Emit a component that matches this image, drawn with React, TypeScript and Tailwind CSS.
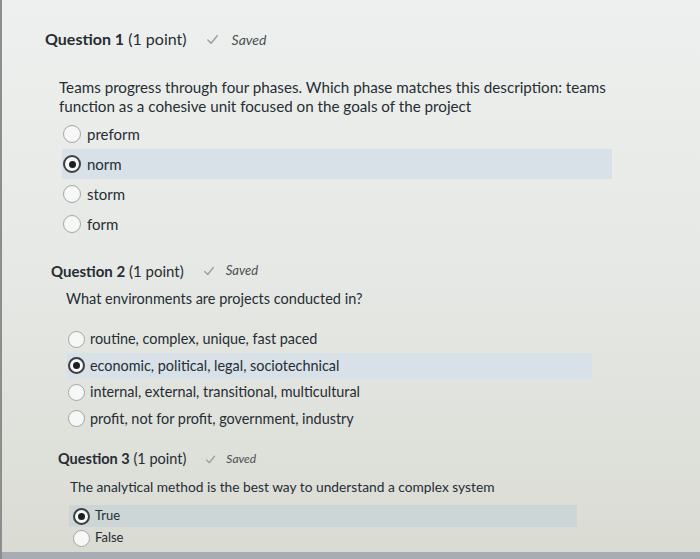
import { Fragment } from 'react';

interface Question {
  num: number;
  text: string[];
  options: string[];
  selected: number;
}

const questions: Question[] = [
  {
    num: 1,
    text: [
      'Teams progress through four phases. Which phase matches this description: teams',
      'function as a cohesive unit focused on the goals of the project',
    ],
    options: ['preform', 'norm', 'storm', 'form'],
    selected: 1,
  },
  {
    num: 2,
    text: ['What environments are projects conducted in?'],
    options: [
      'routine, complex, unique, fast paced',
      'economic, political, legal, sociotechnical',
      'internal, external, transitional, multicultural',
      'profit, not for profit, government, industry',
    ],
    selected: 1,
  },
  {
    num: 3,
    text: ['The analytical method is the best way to understand a complex system'],
    options: ['True', 'False'],
    selected: 0,
  },
];

// per-question sizing, the photo shrinks toward the bottom
const sizes = [
  {
    wrap: 'pl-[43px] pt-[27px]',
    head: 'text-[16px] leading-[24px]',
    saved: 'text-[14px] ml-[18px]',
    check: 'w-[15px] h-[15px] mr-[12px]',
    text: 'text-[15.2px] leading-[19px] mt-[27px] pl-[14px] pr-[4px]',
    list: 'mt-[3px] pl-[17px]',
    row: 'h-[30px] w-[550px] pl-[1px]',
    radio: 'w-[18px] h-[18px]',
    dot: 'w-[7px] h-[7px]',
    label: 'text-[15px] ml-[6px]',
  },
  {
    wrap: 'pl-[49px] pt-[22px]',
    head: 'text-[15px] leading-[20px]',
    saved: 'text-[13px] ml-[18px]',
    check: 'w-[14px] h-[14px] mr-[10px]',
    text: 'text-[14.5px] leading-[18px] mt-[9px] pl-[15px]',
    list: 'mt-[18px] pl-[16px]',
    row: 'h-[26.5px] w-[525px] pl-[1px]',
    radio: 'w-[17px] h-[17px]',
    dot: 'w-[7px] h-[7px]',
    label: 'text-[14.4px] ml-[5px]',
  },
  {
    wrap: 'pl-[56px] pt-[18px]',
    head: 'text-[14.5px] leading-[18px]',
    saved: 'text-[12px] ml-[18px]',
    check: 'w-[13px] h-[13px] mr-[9px]',
    text: 'text-[13.75px] leading-[17px] mt-[10px] pl-[12px]',
    list: 'mt-[10px] pl-[11px]',
    row: 'h-[22px] w-[508px] pl-[4px]',
    radio: 'w-[17px] h-[17px]',
    dot: 'w-[7px] h-[7px]',
    label: 'text-[13px] ml-[5px]',
  },
];

function Check({ className }: { className: string }) {
  return (
    <svg viewBox="0 0 16 16" className={className} fill="none">
      <path d="M3 8.5 L6.5 12 L13 4" stroke="#9a9fa3" strokeWidth="1.6" strokeLinecap="round" strokeLinejoin="round" />
    </svg>
  );
}

export default function App() {
  return (
    <div
      className="w-[700px] h-[559px] flex flex-col overflow-hidden border-l-2 border-[#8c8d8c] bg-gradient-to-b from-[#eef0ef] via-[#e6e8e5] to-[#d9dbd3] text-[#262d33]"
      style={{ fontFamily: 'Lato, "Open Sans", sans-serif' }}
    >
      <div className="flex-1">
        {questions.map((q, qi) => {
          const s = sizes[qi];
          return (
            <div key={q.num} className={s.wrap}>
              {/* header */}
              <div className="flex items-center">
                <span className={s.head}>
                  <span className="font-bold">Question {q.num}</span> (1 point)
                </span>
                <span className={`flex items-center italic text-[#4a4f52] ${s.saved}`}>
                  <Check className={s.check} />
                  Saved
                </span>
              </div>

              {/* question text */}
              <div className={s.text}>
                {q.text.map((line, i) => (
                  <Fragment key={i}>
                    {line}
                    <br />
                  </Fragment>
                ))}
              </div>

              {/* options */}
              <div className={s.list}>
                {q.options.map((opt, oi) => {
                  const on = oi === q.selected;
                  return (
                    <div
                      key={opt}
                      className={`flex items-center ${s.row} ${on ? (qi === 2 ? 'bg-[#ccd6d6]' : 'bg-[#d8e1e8]') : ''}`}
                    >
                      <span
                        className={`flex items-center justify-center rounded-full bg-[#f6f7f6] ${s.radio} ${
                          on ? 'border-2 border-[#3a3f42]' : 'border border-[#a3a6a6]'
                        }`}
                      >
                        {on && <span className={`rounded-full bg-[#1c1f21] ${s.dot}`} />}
                      </span>
                      <span className={s.label}>{opt}</span>
                    </div>
                  );
                })}
              </div>
            </div>
          );
        })}
      </div>
      <div className="h-[7px] bg-[#a8acb3]" />
    </div>
  );
}
